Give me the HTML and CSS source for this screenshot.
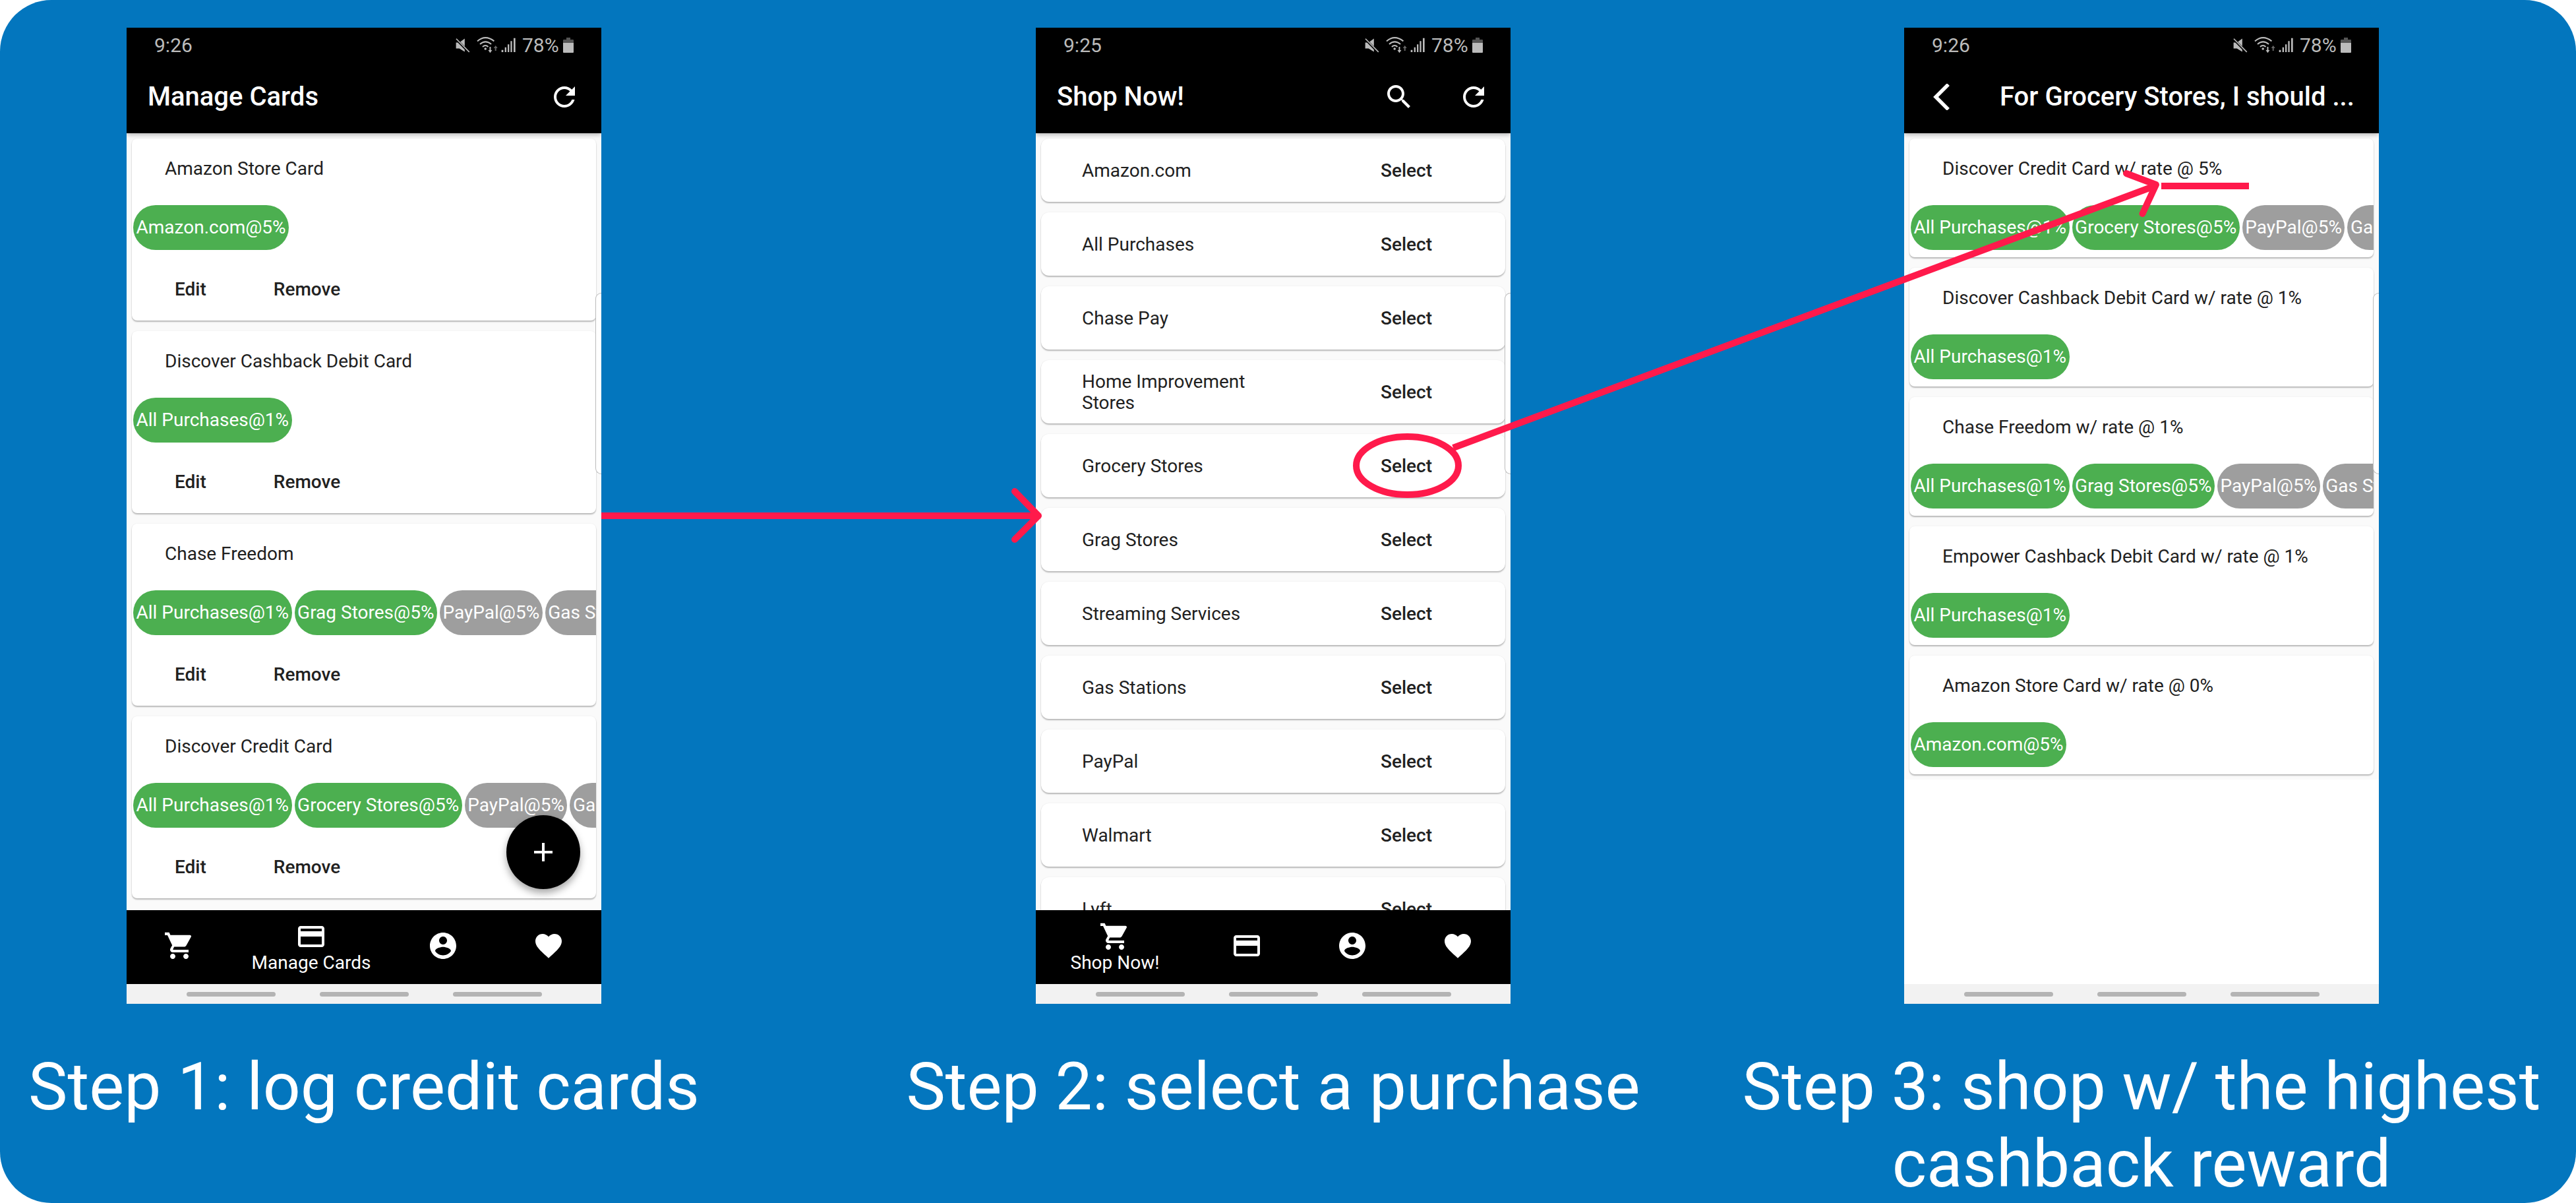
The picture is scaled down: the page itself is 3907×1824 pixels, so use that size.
FILE: index.html
```html
<!DOCTYPE html>
<html lang="en">
<head>
  <meta charset="UTF-8" />
  <title>Cashback steps</title>
  <link rel="stylesheet" href="styles.css">
</head>
<body>
  <svg class="sprite" width="0" height="0">
    <symbol id="i-refresh" viewBox="0 0 24 24"><path d="M17.65 6.35C16.2 4.9 14.21 4 12 4c-4.42 0-7.99 3.58-7.99 8s3.57 8 7.99 8c3.73 0 6.84-2.55 7.73-6h-2.08c-.82 2.33-3.04 4-5.65 4-3.31 0-6-2.69-6-6s2.69-6 6-6c1.66 0 3.14.69 4.22 1.78L13 11h7V4l-2.35 2.35z"/></symbol>
    <symbol id="i-search" viewBox="0 0 24 24"><path d="M15.5 14h-.79l-.28-.27C15.41 12.59 16 11.11 16 9.5 16 5.91 13.09 3 9.5 3S3 5.91 3 9.5 5.91 16 9.5 16c1.61 0 3.09-.59 4.23-1.57l.27.28v.79l5 4.99L20.49 19l-4.99-5zm-6 0C7.01 14 5 11.99 5 9.5S7.01 5 9.5 5 14 7.01 14 9.5 11.99 14 9.5 14z"/></symbol>
    <symbol id="i-cart" viewBox="0 0 24 24"><path d="M7 18c-1.1 0-1.99.9-1.99 2S5.9 22 7 22s2-.9 2-2-.9-2-2-2zM1 2v2h2l3.6 7.59-1.35 2.45c-.16.29-.25.62-.25.96 0 1.1.9 2 2 2h12v-2H7.42c-.14 0-.25-.11-.25-.25l.03-.12.9-1.83h7.45c.75 0 1.41-.41 1.75-1.03l3.58-6.47c.08-.14.12-.31.12-.48 0-.55-.45-1-1-1H5.21l-.94-2H1zm16 16c-1.1 0-1.99.9-1.99 2s.89 2 1.99 2 2-.9 2-2-.9-2-2-2z"/></symbol>
    <symbol id="i-card" viewBox="0 0 24 24"><path d="M20 4H4c-1.11 0-1.99.89-1.99 2L2 18c0 1.11.89 2 2 2h16c1.11 0 2-.89 2-2V6c0-1.11-.89-2-2-2zm0 14H4v-6h16v6zm0-10H4V6h16v2z"/></symbol>
    <symbol id="i-account" viewBox="0 0 24 24"><path d="M12 2C6.48 2 2 6.48 2 12s4.48 10 10 10 10-4.48 10-10S17.52 2 12 2zm0 3c1.66 0 3 1.34 3 3s-1.34 3-3 3-3-1.34-3-3 1.34-3 3-3zm0 14.2c-2.5 0-4.71-1.28-6-3.22.03-1.99 4-3.08 6-3.08 1.99 0 5.97 1.09 6 3.08-1.29 1.94-3.5 3.22-6 3.22z"/></symbol>
    <symbol id="i-heart" viewBox="0 0 24 24"><path d="M12 21.35l-1.45-1.32C5.4 15.36 2 12.28 2 8.5 2 5.42 4.42 3 7.5 3c1.74 0 3.41.81 4.5 2.09C13.09 3.81 14.76 3 16.5 3 19.58 3 22 5.42 22 8.5c0 3.78-3.4 6.86-8.55 11.54L12 21.35z"/></symbol>
    <symbol id="i-plus" viewBox="0 0 24 24"><path d="M19 13h-6v6h-2v-6H5v-2h6V5h2v6h6v2z"/></symbol>
    <symbol id="s-mute" viewBox="30 32 70 72"><path d="M32 55H48L74 36V100L48 84H32Z" fill="#bbb"/><path d="M26 32L92 100" stroke="#000" stroke-width="11" fill="none"/><path d="M33 37L96 101" stroke="#bbb" stroke-width="5" fill="none"/></symbol>
    <symbol id="s-wifi" viewBox="125 30 100 78"><g fill="none" stroke="#bbb" stroke-width="6"><path d="M128 52Q165 20 205 52"/><path d="M140 66Q165 44 192 66"/><path d="M152 78Q165 66 178 78"/><path d="M187 78V96"/></g><circle cx="165" cy="87" r="5.500" fill="#bbb"/><path d="M178 93H196L187 106Z" fill="#bbb"/><path d="M209 84V96H215V84H221L212 72L203 84Z" fill="#666"/></symbol>
    <symbol id="s-signal" viewBox="240 36 66 66"><path d="M242 92h8v10h-8zM257 80h7v22h-7zM270 67h7v35h-7zM283 52h7v50h-7zM297 38h8v64h-8z" fill="#bbb"/></symbol>
    <symbol id="s-battery" viewBox="0 0 16 23"><path d="M5 0h6v3h4a1 1 0 0 1 1 1v5H0V4a1 1 0 0 1 1-1h4z" fill="#555"/><path d="M0 8h16v14a1 1 0 0 1-1 1H1a1 1 0 0 1-1-1z" fill="#bbb"/></symbol>
  </svg>

  <div class="slide">
    <section class="step step-one">
      <div class="phone">
        <div class="statusbar">
          <span class="clock">9:26</span>
          <svg class="st-mute"><use href="#s-mute"/></svg>
          <svg class="st-wifi"><use href="#s-wifi"/></svg>
          <svg class="st-signal"><use href="#s-signal"/></svg>
          <span class="percent">78%</span>
          <svg class="st-battery"><use href="#s-battery"/></svg>
        </div>
        <div class="appbar">
          <h1 class="app-title">Manage Cards</h1>
          <svg class="icon refresh"><use href="#i-refresh"/></svg>
        </div>
        <div class="content">
          <div class="card">
            <div class="card-title">Amazon Store Card</div>
            <div class="chips"><span class="chip">Amazon.com@5%</span></div>
            <div class="actions"><span>Edit</span><span>Remove</span></div>
          </div>
          <div class="card">
            <div class="card-title">Discover Cashback Debit Card</div>
            <div class="chips"><span class="chip">All Purchases@1%</span></div>
            <div class="actions"><span>Edit</span><span>Remove</span></div>
          </div>
          <div class="card">
            <div class="card-title">Chase Freedom</div>
            <div class="chips">
              <span class="chip">All Purchases@1%</span>
              <span class="chip">Grag Stores@5%</span>
              <span class="chip off">PayPal@5%</span>
              <span class="chip off">Gas Stations@1%</span>
            </div>
            <div class="actions"><span>Edit</span><span>Remove</span></div>
          </div>
          <div class="card">
            <div class="card-title">Discover Credit Card</div>
            <div class="chips">
              <span class="chip">All Purchases@1%</span>
              <span class="chip">Grocery Stores@5%</span>
              <span class="chip off">PayPal@5%</span>
              <span class="chip off">Gas Stations@1%</span>
            </div>
            <div class="actions"><span>Edit</span><span>Remove</span></div>
          </div>
        </div>
        <nav class="tabs">
          <div class="tab"><svg class="icon"><use href="#i-cart"/></svg></div>
          <div class="tab active"><svg class="icon"><use href="#i-card"/></svg><span>Manage Cards</span></div>
          <div class="tab"><svg class="icon"><use href="#i-account"/></svg></div>
          <div class="tab"><svg class="icon"><use href="#i-heart"/></svg></div>
        </nav>
        <div class="homebar"><i></i><i></i><i></i></div>
        <div class="edge-handle"></div>
        <div class="fab"><svg class="icon"><use href="#i-plus"/></svg></div>
      </div>
      <p class="caption">Step 1: log credit cards</p>
    </section>

    <section class="step step-two">
      <div class="phone">
        <div class="statusbar">
          <span class="clock">9:25</span>
          <svg class="st-mute"><use href="#s-mute"/></svg>
          <svg class="st-wifi"><use href="#s-wifi"/></svg>
          <svg class="st-signal"><use href="#s-signal"/></svg>
          <span class="percent">78%</span>
          <svg class="st-battery"><use href="#s-battery"/></svg>
        </div>
        <div class="appbar">
          <h1 class="app-title">Shop Now!</h1>
          <svg class="icon search"><use href="#i-search"/></svg>
          <svg class="icon refresh"><use href="#i-refresh"/></svg>
        </div>
        <div class="content">
          <div class="row"><span class="row-name">Amazon.com</span><span class="row-action">Select</span></div>
          <div class="row"><span class="row-name">All Purchases</span><span class="row-action">Select</span></div>
          <div class="row"><span class="row-name">Chase Pay</span><span class="row-action">Select</span></div>
          <div class="row"><span class="row-name">Home Improvement Stores</span><span class="row-action">Select</span></div>
          <div class="row"><span class="row-name">Grocery Stores</span><span class="row-action">Select</span></div>
          <div class="row"><span class="row-name">Grag Stores</span><span class="row-action">Select</span></div>
          <div class="row"><span class="row-name">Streaming Services</span><span class="row-action">Select</span></div>
          <div class="row"><span class="row-name">Gas Stations</span><span class="row-action">Select</span></div>
          <div class="row"><span class="row-name">PayPal</span><span class="row-action">Select</span></div>
          <div class="row"><span class="row-name">Walmart</span><span class="row-action">Select</span></div>
          <div class="row"><span class="row-name">Lyft</span><span class="row-action">Select</span></div>
        </div>
        <nav class="tabs">
          <div class="tab active"><svg class="icon"><use href="#i-cart"/></svg><span>Shop Now!</span></div>
          <div class="tab"><svg class="icon"><use href="#i-card"/></svg></div>
          <div class="tab"><svg class="icon"><use href="#i-account"/></svg></div>
          <div class="tab"><svg class="icon"><use href="#i-heart"/></svg></div>
        </nav>
        <div class="homebar"><i></i><i></i><i></i></div>
        <div class="edge-handle"></div>
      </div>
      <p class="caption">Step 2: select a purchase</p>
    </section>

    <section class="step step-three">
      <div class="phone">
        <div class="statusbar">
          <span class="clock">9:26</span>
          <svg class="st-mute"><use href="#s-mute"/></svg>
          <svg class="st-wifi"><use href="#s-wifi"/></svg>
          <svg class="st-signal"><use href="#s-signal"/></svg>
          <span class="percent">78%</span>
          <svg class="st-battery"><use href="#s-battery"/></svg>
        </div>
        <div class="appbar back-bar">
          <svg class="back" viewBox="0 0 26 40"><path d="M22 3L5 20l17 17" fill="none" stroke="#fff" stroke-width="5.500" stroke-linecap="square"/></svg>
          <h1 class="app-title">For Grocery Stores, I should ...</h1>
        </div>
        <div class="content results">
          <div class="result-list">
            <div class="card short">
              <div class="card-title">Discover Credit Card w/ rate @ 5%</div>
              <div class="chips">
                <span class="chip">All Purchases@1%</span>
                <span class="chip">Grocery Stores@5%</span>
                <span class="chip off">PayPal@5%</span>
                <span class="chip off">Gas Stations@1%</span>
              </div>
            </div>
            <div class="card short">
              <div class="card-title">Discover Cashback Debit Card w/ rate @ 1%</div>
              <div class="chips"><span class="chip">All Purchases@1%</span></div>
            </div>
            <div class="card short">
              <div class="card-title">Chase Freedom w/ rate @ 1%</div>
              <div class="chips">
                <span class="chip">All Purchases@1%</span>
                <span class="chip">Grag Stores@5%</span>
                <span class="chip off">PayPal@5%</span>
                <span class="chip off">Gas Stations@1%</span>
              </div>
            </div>
            <div class="card short">
              <div class="card-title">Empower Cashback Debit Card w/ rate @ 1%</div>
              <div class="chips"><span class="chip">All Purchases@1%</span></div>
            </div>
            <div class="card short">
              <div class="card-title">Amazon Store Card w/ rate @ 0%</div>
              <div class="chips"><span class="chip">Amazon.com@5%</span></div>
            </div>
          </div>
        </div>
        <div class="homebar"><i></i><i></i><i></i></div>
        <div class="edge-handle"></div>
      </div>
      <p class="caption">Step 3: shop w/ the highest<br>cashback reward</p>
    </section>

    <svg class="marks" viewBox="0 0 3907 1824">
      <g fill="none" stroke="#ff1a4b" stroke-width="10" stroke-linecap="round" stroke-linejoin="round">
        <path d="M912 782H1572" stroke-linecap="butt"/>
        <path d="M1539 745L1575 782L1539 818"/>
        <ellipse cx="2134.500" cy="706" rx="77.500" ry="44"/>
        <path d="M2204 679L3268 282" stroke-linecap="butt"/>
        <path d="M3225 263L3270 280L3249.500 324"/>
        <path d="M3278 282H3411" stroke-linecap="butt"/>
      </g>
    </svg>
  </div>
</body>
</html>
```

FILE: styles.css
```css
* { box-sizing: border-box; }
html, body {
  margin: 0;
  background: #fff;
}
body {
  width: 3907px;
  height: 1824px;
  overflow: hidden;
  font-family: Roboto, sans-serif;
}
.sprite { position: absolute; }

.slide {
  position: relative;
  display: flex;
  width: 3907px;
  height: 1824px;
  padding: 42px 0 0 45px;
  background: #0376be;
  border-radius: 78px;
  overflow: hidden;
}
.step {
  display: flex;
  flex-direction: column;
  align-items: center;
}
.step-one { width: 1014px; }
.step-two { width: 1112px; margin-left: 316px; }
.step-three { width: 1208px; margin-left: 157px; }
.caption {
  margin: 67px 0 0;
  font-size: 100px;
  line-height: 117px;
  color: #fff;
  text-align: center;
  white-space: nowrap;
}

/* phone frame */
.phone {
  position: relative;
  display: flex;
  flex-direction: column;
  flex: none;
  width: 720px;
  height: 1480px;
  background: #fafafa;
  overflow: hidden;
}
.statusbar {
  display: flex;
  align-items: center;
  flex: none;
  height: 52px;
  padding-left: 42px;
  background: #000;
  color: #bbb;
  font-size: 30px;
}
.clock { margin-right: auto; }
.st-mute { width: 22px; height: 23px; }
.st-wifi { width: 33px; height: 26px; margin-left: 10px; }
.st-signal { width: 22px; height: 22px; margin-left: 4px; }
.percent { width: 55px; margin-left: 10px; white-space: nowrap; }
.st-battery { width: 16px; height: 23px; margin: 0 42px 0 7px; }

.appbar {
  position: relative;
  z-index: 2;
  display: flex;
  align-items: center;
  flex: none;
  height: 108px;
  padding: 0 32px 3px;
  background: #000;
  box-shadow: 0 2px 7px rgba(0, 0, 0, 0.3);
}
.app-title {
  flex: 1;
  margin: 0;
  font-size: 40px;
  font-weight: 500;
  color: #fff;
  white-space: nowrap;
}
.icon { width: 48px; height: 48px; fill: #fff; }
.search { margin-right: 65px; }
.back-bar { padding-left: 43px; }
.back { width: 26px; height: 40px; margin-right: 76px; flex: none; }

.content {
  flex: 1;
  min-height: 0;
  padding: 8px 8px 0;
  overflow: hidden;
}
.results {
  padding: 0;
  background: #fff;
}
.result-list {
  padding: 8px;
  background: #fafafa;
}
.result-list .card:last-child { margin-bottom: 0; }

/* cards */
.card {
  height: 276px;
  margin-bottom: 16px;
  background: #fff;
  border-radius: 8px;
  box-shadow: 0 2px 2px rgba(0, 0, 0, 0.25), 0 0 2px rgba(0, 0, 0, 0.08);
  overflow: hidden;
}
.card.short { height: 180px; }
.card-title {
  height: 90px;
  padding-left: 50px;
  font-size: 28px;
  line-height: 91px;
  color: #212121;
}
.chips {
  display: flex;
  gap: 4px;
  height: 68px;
  margin-top: 11px;
  padding-left: 2px;
}
.chip {
  flex: none;
  height: 68px;
  padding: 0 4.5px;
  border-radius: 34px;
  background: #4caf50;
  color: #fff;
  font-size: 28px;
  line-height: 68px;
  white-space: nowrap;
}
.chip.off { background: #9e9e9e; }
.actions {
  display: flex;
  gap: 102px;
  margin-top: 34px;
  padding-left: 65px;
  font-size: 28px;
  font-weight: 500;
  line-height: 52px;
  color: #212121;
}

/* purchase rows */
.row {
  display: flex;
  align-items: center;
  height: 96px;
  margin-bottom: 16px;
  padding-left: 62px;
  background: #fff;
  border-radius: 12px;
  box-shadow: 0 2px 2px rgba(0, 0, 0, 0.25), 0 0 2px rgba(0, 0, 0, 0.08);
}
.row-name {
  flex: 1;
  padding: 1px 130px 0 0;
  font-size: 28px;
  line-height: 32px;
  color: #212121;
}
.row-action {
  width: 120px;
  margin-right: 90px;
  font-size: 28px;
  font-weight: 500;
  text-align: center;
  color: #212121;
}

/* bottom tabs */
.tabs {
  display: flex;
  flex: none;
  height: 112px;
  background: #000;
}
.tab {
  display: flex;
  flex-direction: column;
  align-items: center;
  flex: none;
  width: 160px;
  padding-top: 30px;
}
.tab.active {
  width: 240px;
  padding-top: 16px;
  color: #fff;
  font-size: 28px;
  line-height: 32px;
}
.homebar {
  display: flex;
  gap: 67px;
  flex: none;
  height: 30px;
  padding: 12px 0 0 91px;
  background: #f2f2f2;
}
.homebar i {
  width: 135px;
  height: 7px;
  border-radius: 4px;
  background: #b4b4b4;
}

/* things on top of the screen */
.edge-handle {
  position: absolute;
  top: 402px;
  right: 0;
  width: 9px;
  height: 275px;
  background: #fff;
  border: 1px solid #bbb;
  border-right: none;
  border-radius: 12px 0 0 12px;
}
.fab {
  position: absolute;
  top: 1194px;
  left: 576px;
  display: flex;
  align-items: center;
  justify-content: center;
  width: 112px;
  height: 112px;
  border-radius: 50%;
  background: #000;
  box-shadow: 0 6px 12px rgba(0, 0, 0, 0.35);
}
.marks {
  position: absolute;
  top: 0;
  left: 0;
  width: 3907px;
  height: 1824px;
  pointer-events: none;
}
```
